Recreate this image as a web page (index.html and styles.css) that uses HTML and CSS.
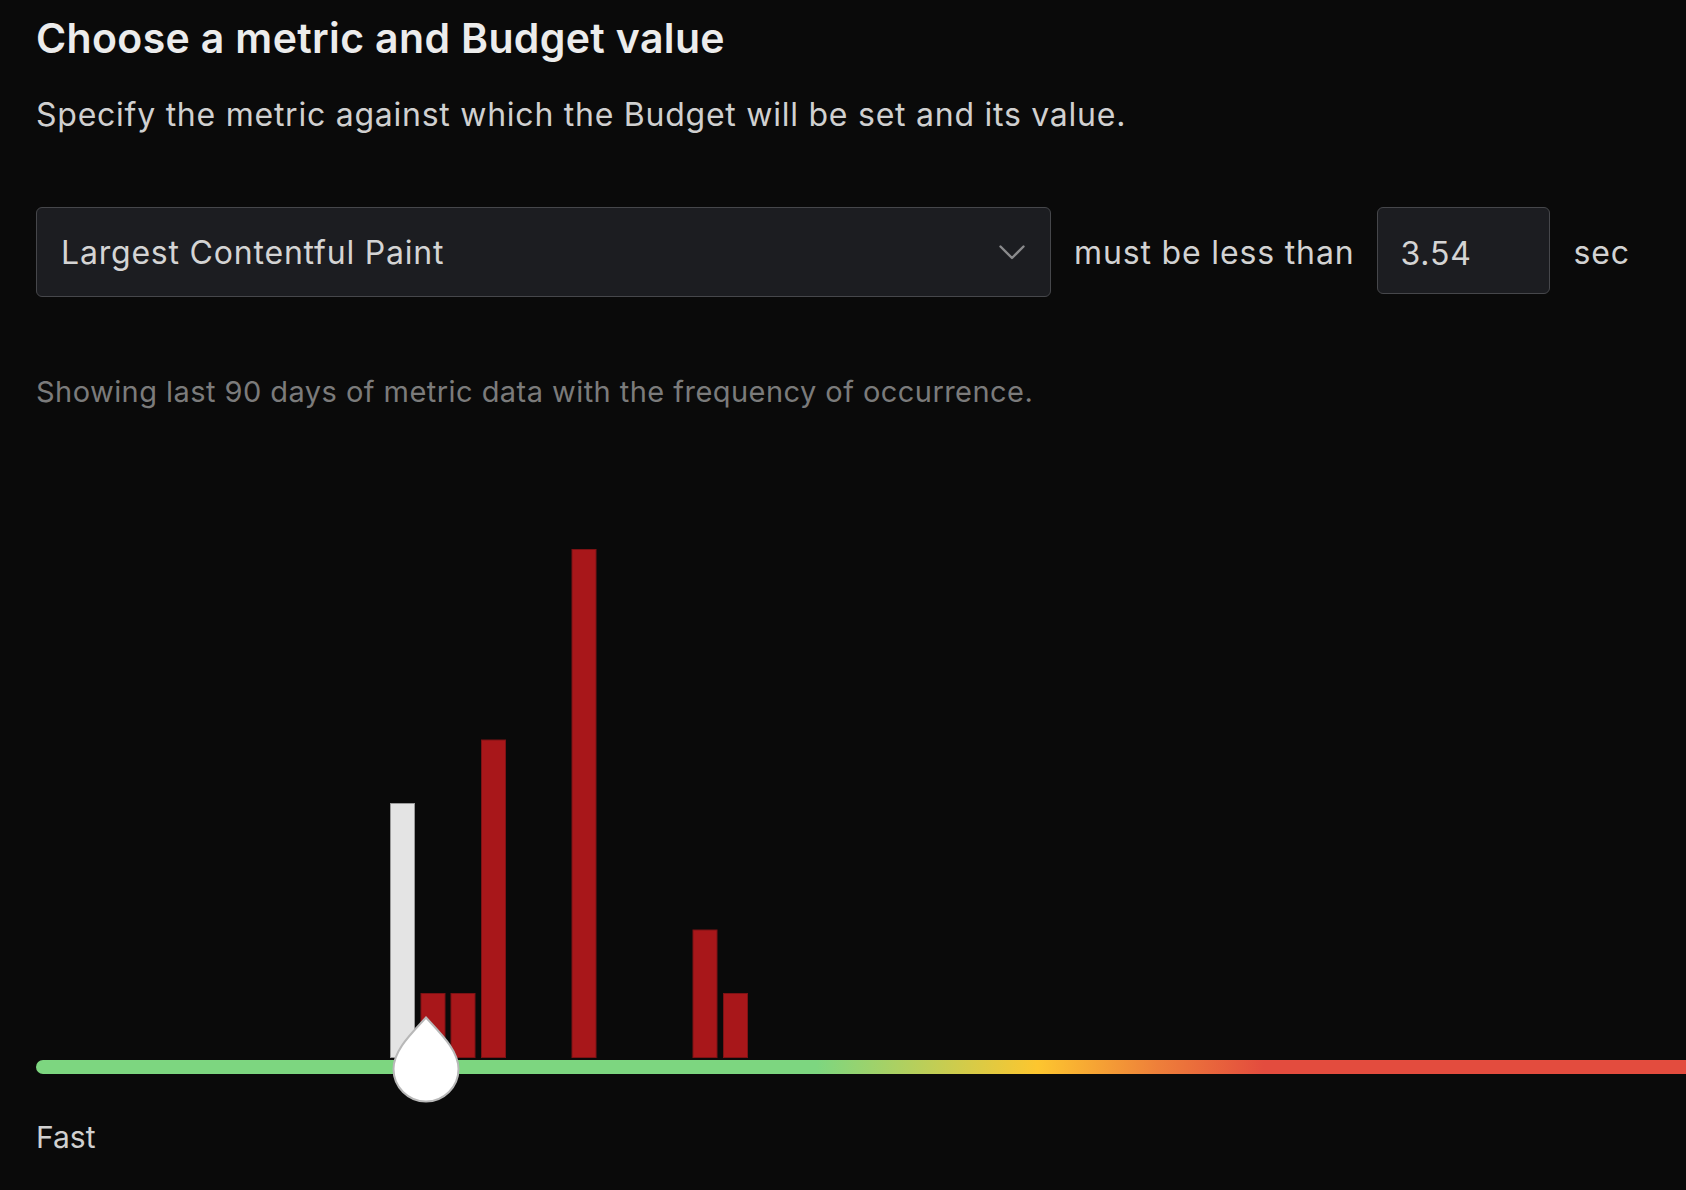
FILE: index.html
```html
<!DOCTYPE html>
<html lang="en">
<head>
  <meta charset="UTF-8">
  <meta name="viewport" content="width=device-width, initial-scale=1.0">
  <title>Budget metric</title>
  <link rel="stylesheet" href="styles.css">
</head>
<body>
  <div class="page">
    <h1 class="title">Choose a metric and Budget value</h1>
    <p class="subtitle">Specify the metric against which the Budget will be set and its value.</p>

    <div class="controls">
      <div class="select">
        <span>Largest Contentful Paint</span>
        <svg class="chevron" width="26" height="15" viewBox="0 0 26 15">
          <path d="M1.5 1.5 L13 13 L24.5 1.5" fill="none" stroke="#8a8a8c" stroke-width="2.4" stroke-linecap="round" stroke-linejoin="round"/>
        </svg>
      </div>
      <span class="label">must be less than</span>
      <input class="value" type="text" value="3.54">
      <span class="label">sec</span>
    </div>

    <p class="hint">Showing last 90 days of metric data with the frequency of occurrence.</p>

    <svg class="chart" width="1650" height="620" viewBox="0 0 1650 620">
      <defs>
        <linearGradient id="speed" x1="0" y1="0" x2="1650" y2="0" gradientUnits="userSpaceOnUse">
          <stop offset="0.473" stop-color="#7dd680"/>
          <stop offset="0.607" stop-color="#fdc62f"/>
          <stop offset="0.68" stop-color="#ee7f3a"/>
          <stop offset="0.744" stop-color="#e34c3e"/>
          <stop offset="1" stop-color="#e34c3e"/>
        </linearGradient>
      </defs>
      <rect class="bar-ok" x="354.5" y="313.5" width="24" height="254"/>
      <rect class="bar-over" x="385" y="503.5" width="24" height="64"/>
      <rect class="bar-over" x="415" y="503.5" width="24" height="64"/>
      <rect class="bar-over" x="445.5" y="250" width="24" height="317.5"/>
      <rect class="bar-over" x="536" y="59.5" width="24" height="508"/>
      <rect class="bar-over" x="657" y="440" width="24" height="127.5"/>
      <rect class="bar-over" x="687.5" y="503.5" width="24" height="64"/>
      <rect x="0" y="570" width="1670" height="14" rx="7" fill="url(#speed)"/>
      <path class="thumb" d="M390 527.5 C376 543 357.5 560 357.5 579 A32.5 32.5 0 0 0 422.5 579 C422.5 560 404 543 390 527.5 Z"/>
    </svg>

    <div class="axis">Fast</div>
  </div>
</body>
</html>
```

FILE: styles.css
```css
body {
  margin: 0;
  background: #0a0a0a;
  font-family: Inter, 'Noto Sans', sans-serif;
  color: #d2d2d2;
  overflow: hidden;
}
.page {
  padding: 14px 0 0 36px;
}
.title {
  margin: 0;
  font-size: 41px;
  line-height: 48px;
  font-weight: 600;
  color: #ececec;
  letter-spacing: 0.35px;
}
.subtitle {
  margin: 33px 0 0;
  font-size: 32px;
  line-height: 40px;
  color: #d0d0d0;
  letter-spacing: 0.75px;
}
.controls {
  display: flex;
  align-items: center;
  gap: 23px;
  margin-top: 72px;
  height: 90px;
}
.select {
  box-sizing: border-box;
  width: 1015px;
  height: 90px;
  display: flex;
  align-items: center;
  justify-content: space-between;
  padding: 0 25px 0 24px;
  background: #1c1d21;
  border: 1.5px solid #46474b;
  border-radius: 6px;
  font-size: 32px;
  color: #d4d4d4;
  letter-spacing: 0.8px;
}
.label {
  font-size: 32px;
  color: #d2d2d2;
  letter-spacing: 0.85px;
}
.value {
  box-sizing: border-box;
  align-self: flex-start;
  width: 173px;
  height: 87px;
  padding: 5px 0 0 22px;
  margin: 0;
  background: #1c1d21;
  border: 1.5px solid #46474b;
  border-radius: 6px;
  font-family: inherit;
  font-size: 32px;
  color: #d4d4d4;
  letter-spacing: 0.8px;
  outline: none;
}
.hint {
  margin: 77px 0 0;
  font-size: 29px;
  line-height: 36px;
  color: #7b7b7b;
  letter-spacing: 0.45px;
}
.chart {
  display: block;
  margin-top: 80px;
}
.bar-ok {
  fill: #e4e4e4;
  stroke: #9a9a9a;
  stroke-width: 1;
}
.bar-over {
  fill: #a8171a;
  stroke: #7c1214;
  stroke-width: 1;
}
.thumb {
  fill: #ffffff;
  stroke: #b8b8b8;
  stroke-width: 2;
}
.axis {
  margin-top: 9px;
  font-size: 30px;
  line-height: 36px;
  color: #d0d0d0;
}
```
